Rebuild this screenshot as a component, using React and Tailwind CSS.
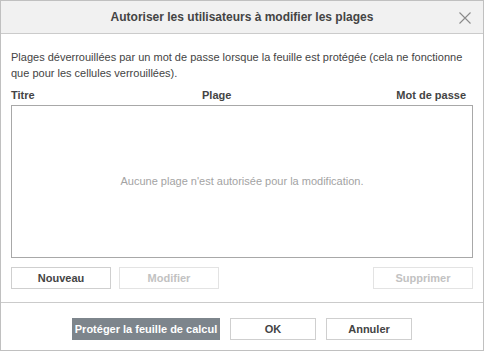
import React from 'react';

const Btn = ({ children, disabled, className = '' }) => (
    <button
        className={
            'h-[22px] box-border border text-[11px] font-bold ' +
            (disabled
                ? 'border-[#e3e3e3] text-[#c2c2c2] bg-white '
                : 'border-[#cfcfcf] text-[#444] bg-white ') +
            className
        }
    >
        {children}
    </button>
);

const App = () => {
    return (
        <div
            className="w-[484px] h-[351px] box-border border border-[#c0c0c0] bg-white flex flex-col text-[#444]"
            style={{ fontFamily: '"Liberation Sans", Arial, sans-serif' }}
        >
            {/* header */}
            <div className="relative h-[33px] shrink-0 bg-[#f1f1f1] border-b border-[#cbcbcb] flex items-center justify-center">
                <span className="text-[12px] font-bold text-[#444]">Autoriser les utilisateurs à modifier les plages</span>
                <svg className="absolute right-[12px] top-[11px]" width="12" height="12" viewBox="0 0 12 12">
                    <path d="M0.5 0.5 L11.5 11.5 M11.5 0.5 L0.5 11.5" stroke="#8a8a8a" strokeWidth="1.1" fill="none" />
                </svg>
            </div>

            {/* body */}
            <div className="px-[10px] pt-[15px] flex flex-col">
                <p className="text-[11px] leading-[16px]">
                    Plages déverrouillées par un mot de passe lorsque la feuille est protégée (cela ne fonctionne que pour les cellules verrouillées).
                </p>
                <div className="mt-[6px] flex text-[11px] font-bold leading-[16px]">
                    <span className="w-[191px]">Titre</span>
                    <span>Plage</span>
                    <span className="ml-auto pr-[7px]">Mot de passe</span>
                </div>
                <div className="mt-[2px] h-[153px] box-border border border-[#a8a8a8] flex items-center justify-center">
                    <span className="text-[11px] text-[#a3a3a3]">Aucune plage n'est autorisée pour la modification.</span>
                </div>
                <div className="mt-[9px] flex gap-[8px]">
                    <Btn className="w-[100px]">Nouveau</Btn>
                    <Btn disabled className="w-[100px]">Modifier</Btn>
                    <Btn disabled className="w-[100px] ml-auto">Supprimer</Btn>
                </div>
            </div>

            {/* footer */}
            <div className="mt-[13px] border-t border-[#cbcbcb] flex-1 flex justify-center pt-[15px] gap-[10px]">
                <button className="h-[22px] w-[148px] bg-[#7d858c] text-white text-[11px] font-bold">Protéger la feuille de calcul</button>
                <Btn className="w-[86px]">OK</Btn>
                <Btn className="w-[86px]">Annuler</Btn>
            </div>
        </div>
    );
};

export default App;
